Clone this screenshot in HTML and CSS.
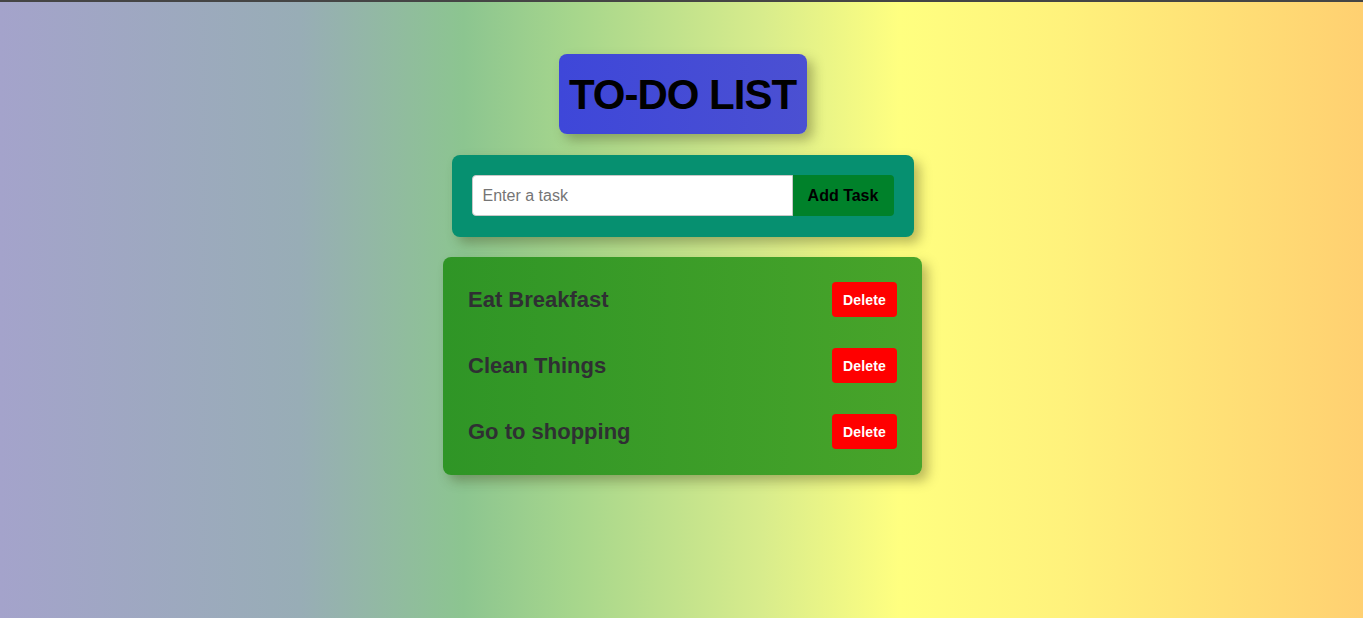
FILE: index.html
```html
<!DOCTYPE html>
<html lang="en">
<head>
<meta charset="utf-8">
<title>To-Do List</title>
<link rel="stylesheet" href="styles.css">
</head>
<body>
  <main class="app">
    <h1 class="title">TO-DO LIST</h1>
    <form class="task-form">
      <input class="task-input" type="text" placeholder="Enter a task">
      <button class="add-btn" type="button">Add Task</button>
    </form>
    <ul class="task-list">
      <li class="task"><span class="task-text">Eat Breakfast</span><button class="del-btn" type="button">Delete</button></li>
      <li class="task"><span class="task-text">Clean Things</span><button class="del-btn" type="button">Delete</button></li>
      <li class="task"><span class="task-text">Go to shopping</span><button class="del-btn" type="button">Delete</button></li>
    </ul>
  </main>
</body>
</html>
```
FILE: styles.css
```css
html, body {
  margin: 0;
  padding: 0;
  height: 100%;
}
body {
  border-top: 2px solid #454545;
  box-sizing: border-box;
  background: linear-gradient(to right, #a4a3cb 0%, #98adb6 22%, #8cc590 34%, #a6d68c 42%, #d8ec8c 56%, #ffff80 66%, #fff27c 78%, #ffd071 100%);
  font-family: "Liberation Sans", Arial, sans-serif;
}
.app {
  display: flex;
  flex-direction: column;
  align-items: center;
  padding-top: 52px;
  padding-left: 2px;
}
.title {
  margin: 0;
  height: 80px;
  width: 248px;
  box-sizing: border-box;
  text-align: center;
  white-space: nowrap;
  line-height: 82px;
  font-family: "Liberation Sans", Arial, sans-serif;
  font-weight: 700;
  font-size: 42px;
  letter-spacing: -1px;
  color: #000;
  background: linear-gradient(to right, #3e47d9, #4b50d2);
  border-radius: 8px;
  box-shadow: 6px 6px 12px rgba(60, 60, 20, 0.35);
}
.task-form {
  margin-top: 21px;
  display: flex;
  padding: 20px 20px 21px;
  width: 462px;
  box-sizing: border-box;
  background: #069070;
  border-radius: 8px;
  box-shadow: 6px 6px 12px rgba(60, 60, 20, 0.35);
}
.task-input {
  width: 321px;
  height: 41px;
  box-sizing: border-box;
  border: 1px solid #c8c8c8;
  border-radius: 4px 0 0 4px;
  padding: 0 10px;
  font-family: "Liberation Sans", Arial, sans-serif;
  font-size: 16px;
  outline: none;
}
.task-input::placeholder {
  color: #757575;
}
.add-btn {
  width: 101px;
  height: 41px;
  border: none;
  border-radius: 0 4px 4px 0;
  background: #00812a;
  color: #000;
  font-family: "Liberation Sans", Arial, sans-serif;
  font-weight: 700;
  font-size: 16px;
}
.task-list {
  list-style: none;
  margin: 20px 0 0;
  padding: 25px 25px 26px;
  width: 479px;
  box-sizing: border-box;
  display: flex;
  flex-direction: column;
  gap: 31px;
  background: linear-gradient(to right, #2f9526, #48a42a);
  border-radius: 8px;
  box-shadow: 6px 6px 12px rgba(60, 60, 20, 0.35);
}
.task {
  display: flex;
  align-items: center;
  justify-content: space-between;
  height: 35px;
}
.task-text {
  font-family: "Liberation Sans", Arial, sans-serif;
  font-weight: 700;
  font-size: 22px;
  color: #2f2f33;
}
.del-btn {
  width: 65px;
  height: 35px;
  border: none;
  border-radius: 4px;
  background: #ff0000;
  color: #fff;
  font-family: "Liberation Sans", Arial, sans-serif;
  font-weight: 700;
  font-size: 14px;
  letter-spacing: 0.2px;
}
```
